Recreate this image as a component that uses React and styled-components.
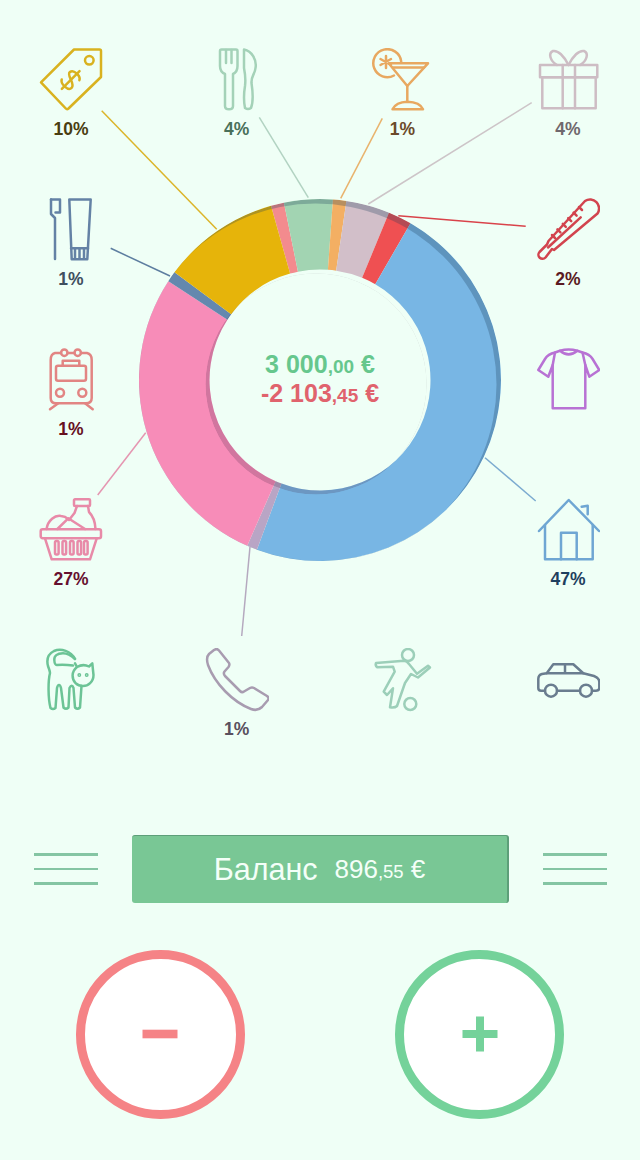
import React from "react";
import styled, { createGlobalStyle } from "styled-components";

const GlobalStyle = createGlobalStyle`
  html, body {
    margin: 0;
    padding: 0;
    background: #effff6;
  }
`;

const CX = 320;
const CY = 380;
const OUTER = 181;
const HOLE = 110.5;
const SHIFT_X = -4;
const SHIFT_Y = 4;
const RIM_X = -4.5;
const RIM_Y = 4.5;

const segments = [
  { from: -15.7, to: -11.5, color: "#f38b8e" },
  { from: -11.5, to: 4.1, color: "#a2d4b2" },
  { from: 4.1, to: 8.4, color: "#f3af63" },
  { from: 8.4, to: 22.4, color: "#d2bfc9" },
  { from: 22.4, to: 30, color: "#ef5052" },
  { from: 30, to: 200.4, color: "#78b6e4" },
  { from: 200.4, to: 203.7, color: "#b9a5c5" },
  { from: 203.7, to: 303.1, color: "#f78cb8" },
  { from: 303.1, to: 306.5, color: "#6488ae" },
  { from: 306.5, to: 344.3, color: "#e6b40a" },
];

const leaders = [
  { d: "M101.7 110.7 L216.7 229.3", color: "#dcb52a" },
  { d: "M259.3 117.3 L308.3 197.7", color: "#b2d3c2" },
  { d: "M382.3 118.3 L340.7 198.3", color: "#e9b36d" },
  { d: "M531.7 102.7 L368.3 204", color: "#cdc5c8" },
  { d: "M525.7 226.3 L398.3 215.7", color: "#d9434a" },
  { d: "M110.7 248.3 L170 276", color: "#5d7ea0" },
  { d: "M97.7 495 L145.7 432.7", color: "#e596b1" },
  { d: "M535.7 501 L485 457.7", color: "#7cabd0" },
  { d: "M241.7 636 L250 546.7", color: "#b5a9bf" },
];

const polar = (r, deg) => {
  const a = (deg * Math.PI) / 180;
  return [CX + r * Math.sin(a), CY - r * Math.cos(a)];
};

const ringPath = (from, to) => {
  const large = to - from > 180 ? 1 : 0;
  const [ax, ay] = polar(OUTER, from);
  const [bx, by] = polar(OUTER, to);
  const [cx, cy] = polar(HOLE, to);
  const [dx, dy] = polar(HOLE, from);
  return `M${ax} ${ay} A${OUTER} ${OUTER} 0 ${large} 1 ${bx} ${by} L${cx} ${cy} A${HOLE} ${HOLE} 0 ${large} 0 ${dx} ${dy} Z`;
};

const circlePath = (cx, cy, r) =>
  `M${cx - r} ${cy} a${r} ${r} 0 1 0 ${2 * r} 0 a${r} ${r} 0 1 0 ${-2 * r} 0 Z`;

const Icon = styled.svg.attrs({ viewBox: "0 0 64 64" })`
  display: block;
  width: 64px;
  height: 64px;
  fill: none;
  stroke: ${(p) => p.$tone};
  stroke-width: 2.5;
  stroke-linejoin: round;
  stroke-linecap: round;
`;

const TagIcon = (props) => (
  <Icon {...props}>
    <path d="M35 1.5 H60.5 Q62 1.5 62 3 V29 L29.5 60.5 Q28 61.8 26.8 60.5 L2 34.3 Z" />
    <circle cx="50.3" cy="12.3" r="4.3" />
    <g transform="rotate(45 31.7 32)">
      <path d="M38 26 C36 22 26 22 25.5 27 C25 32 38 31 38 37 C38 42 27 42 25 38" />
      <path d="M31.7 19.5 V44.5" />
    </g>
  </Icon>
);

const CutleryIcon = (props) => (
  <Icon {...props}>
    <path d="M16.5 1.5 H31 Q32.5 1.5 32.5 3 V18 Q32.5 24 28 26 V58 Q28 61.3 24 61.3 Q20 61.3 20 58 V26 Q15 24 15 18 V3 Q15 1.5 16.5 1.5 Z" />
    <path d="M21 2 V15 M26.5 2 V15" />
    <path d="M39 1.5 C47 3 52 12 50.5 20 C50 26 46 28 46.5 35 C48 45 48 55 46 60 Q43 62 40 60 Q38 50 40 38 Q41 30 39 20 Z" />
  </Icon>
);

const CocktailIcon = (props) => (
  <Icon {...props}>
    <path d="M31.2 13.5 A14 14 0 1 0 24 27.5" />
    <path d="M18.7 15.3 H58 L37.3 38 Z" />
    <path d="M23 19.5 H54" />
    <path d="M37.3 38 V53.7" />
    <path d="M22.5 61.3 Q26 54 37.3 53.7 Q50 54 53 61.3 Z" />
    <path d="M16 8 V20 M10.5 11 L21 17 M10.5 17 L21 11" />
  </Icon>
);

const GiftIcon = (props) => (
  <Icon {...props}>
    <rect x="4" y="17" width="57.3" height="12.3" />
    <rect x="6.3" y="29.3" width="53.4" height="31" />
    <path d="M26.7 17 V60.3 M39 17 V60.3" />
    <path d="M32.5 17 C28 8 22 2 17 3 C12 5 14 13 21 17" />
    <path d="M32.5 17 C37 8 43 2 48 3 C53 5 51 13 44 17" />
  </Icon>
);

const ThermometerIcon = (props) => (
  <Icon {...props}>
    <path d="M49 3 A9 9 0 0 1 61.5 15.5 L18 52 L16 51 L9.5 59.5 A3.5 3.5 0 0 1 3.5 54 L11 46.5 L12.5 43 Z" />
    <path d="M44.7 19.3 L12 49.5" />
    {[0, 1, 2, 3, 4, 5].map((i) => (
      <path key={i} d={`M${43 - 5.4 * i} ${9 + 5.6 * i} l3 3`} />
    ))}
  </Icon>
);

const DentalIcon = (props) => (
  <Icon {...props}>
    <path d="M12 1.5 H21 V14.5 H16.5" />
    <path d="M12 1.5 V16 L16 20 V61" />
    <path d="M30.3 1.5 H51.7 L48.3 61.3 H32.7 Z" />
    <path d="M32 50.3 H49 M36 50.3 V60 M40.5 50.3 V60 M45 50.3 V60" />
  </Icon>
);

const TrainIcon = (props) => (
  <Icon {...props}>
    <path d="M22 5 H16 Q11.7 6 11.7 12 V50 Q11.7 55.3 17 55.3 H47 Q52.7 55.3 52.7 50 V12 Q52.7 6 48 5 H42 M28.5 5 H35.5" />
    <circle cx="25.3" cy="4.7" r="3.2" />
    <circle cx="38.7" cy="4.7" r="3.2" />
    <rect x="17" y="17.7" width="30" height="15" rx="2" />
    <path d="M23.7 17.7 V12.7 H40.3 V17.7" />
    <circle cx="21" cy="44.7" r="4" />
    <circle cx="43.3" cy="44.7" r="4" />
    <path d="M11 61.3 L19.3 55.3 M53.7 61.3 L46 55.3" />
  </Icon>
);

const BasketIcon = (props) => (
  <Icon {...props}>
    <rect x="1.7" y="31.3" width="60.3" height="9" rx="2" />
    <path d="M6 40.3 L12.7 61.3 H51 L57.7 40.3" />
    {[16, 23.5, 31, 38.5, 45].map((x) => (
      <rect key={x} x={x} y="43" width="3.6" height="13.5" rx="1.5" />
    ))}
    <rect x="35" y="1.3" width="16" height="6.7" rx="1" />
    <path d="M38 8 L35.5 15 L30 22 M49 8 L50 14 Q56 20 56.5 31" />
    <path d="M18.4 31 L29.3 20.3 L46 31" />
    <path d="M7.5 31 C9 22 16 17 22 18 C25 18.3 27 19 29 21" />
  </Icon>
);

const ShirtIcon = (props) => (
  <Icon {...props}>
    <path d="M24 2.7 L19 4.5 Q12 6 9 11 L2.3 22 L12.3 28.7 L16.7 17 V60.3 H49.3 V17 L53.3 28.7 L63.3 22 L56.6 11 Q53.5 6 46.5 4.5 L41.3 2.7 Q32.6 0.5 24 2.7 Z" />
    <path d="M24 2.7 Q32.6 10 41.3 2.7" />
    <path d="M19 4.5 L16.7 17 M46.5 4.5 L49.3 17" />
  </Icon>
);

const HouseIcon = (props) => (
  <Icon {...props}>
    <path d="M3 33 L32.7 2 L63 33" />
    <path d="M9 27 V61.3 H56.7 V27" />
    <path d="M25 61.3 V34.7 H40.7 V61.3" />
    <path d="M45.7 8.7 L51.7 7.7 V16.3" />
  </Icon>
);

const CatIcon = (props) => (
  <Icon {...props}>
    <path d="M36 11 C32 3 22 0 15 3 C9 6 7.5 12 9 18 C10 21 11 23 11 25 C9 33 9 50 11.5 60 Q14 62 16.5 60 L18 40 C19 36 21 36 22 40 L24.5 59.5 Q27 62 29.5 59.5 L30.5 40 C32 37 33.5 37 34.5 40 L36 59.5 Q38.5 62 41 59.5 L42.5 38" />
    <path d="M36 11 C31 6.5 28 5.3 24 5.3 C18 5.3 15 8 15.3 12 C15.5 15 16 17 17.7 17 Q26 16.5 34 17.5" />
    <path d="M36 15.3 L38 19 Q44 15.5 50 18.5 L53.3 15.3 L54.5 27 C54.5 34 49 38 44 38 C38 38 33.6 34 33.6 27.5 C33.6 24 35 21.5 38 19" />
    <circle cx="40.3" cy="27" r="0.7" />
    <circle cx="47.7" cy="27" r="0.7" />
  </Icon>
);

const PhoneIcon = (props) => (
  <Icon {...props}>
    <path d="M9 2 Q12 0 14 2.5 L24 15 Q25 17 23.5 19 L19.5 23.5 Q18 25.5 20 28 L35 43 Q37 45 39 43.5 L45 40 Q47 39 49 40 L62 48 Q64.5 50 63 52 L57 59 C54 62 50 62.5 46 61 C28 54 10 36 3 17 C1.5 12 2 8 4 6 Z" />
  </Icon>
);

const PlayerIcon = (props) => (
  <Icon {...props}>
    <circle cx="38" cy="7" r="6" />
    <circle cx="40.3" cy="56" r="6" />
    <path d="M6 15 L34 12.7 Q37 13 39 16 L47 25.7 L58 17.7 L60 19.5 L48 29.5 L41 26 L35 35 L27 58 Q25 60 20 59.3 L23 40.3 L17 47 L13.7 43.7 L24.7 23.7 L23 18.7 L7 19.3 Q5 17 6 15 Z" />
  </Icon>
);

const CarIcon = (props) => (
  <Icon {...props}>
    <path d="M9 42.7 H5 Q2.3 42.7 2.3 40 V31 Q2.3 27 6 26 L10.7 25.3 L17.3 16.3 H37.3 L47.3 25.3 L58 28 Q63.3 30 63.3 34 V40 Q63.3 42.7 60 42.7 H56 M21 42.7 H44" />
    <circle cx="15" cy="42.7" r="6" />
    <circle cx="50" cy="42.7" r="6" />
    <path d="M10.7 25.3 H47.3 M29 16.3 V25.3" />
  </Icon>
);

const items = [
  { Glyph: TagIcon, col: 1, row: 1, tone: "#d9b21f", label: "10%", ink: "#4a3d10" },
  { Glyph: CutleryIcon, col: 2, row: 1, tone: "#a4d2b8", label: "4%", ink: "#49705a" },
  { Glyph: CocktailIcon, col: 3, row: 1, tone: "#e8a860", label: "1%", ink: "#6b4a2a" },
  { Glyph: GiftIcon, col: 4, row: 1, tone: "#cdbdc4", label: "4%", ink: "#6f686d" },
  { Glyph: DentalIcon, col: 1, row: 2, tone: "#6482a5", label: "1%", ink: "#3f4f5f" },
  { Glyph: ThermometerIcon, col: 4, row: 2, tone: "#d2444e", label: "2%", ink: "#5a1a22" },
  { Glyph: TrainIcon, col: 1, row: 3, tone: "#e28583", label: "1%", ink: "#66101f" },
  { Glyph: ShirtIcon, col: 4, row: 3, tone: "#b872d4" },
  { Glyph: BasketIcon, col: 1, row: 4, tone: "#e88aa8", label: "27%", ink: "#66102f" },
  { Glyph: HouseIcon, col: 4, row: 4, tone: "#6fa6d3", label: "47%", ink: "#1f3f5f" },
  { Glyph: CatIcon, col: 1, row: 5, tone: "#6cc496" },
  { Glyph: PhoneIcon, col: 2, row: 5, tone: "#a89cb0", label: "1%", ink: "#59505e" },
  { Glyph: PlayerIcon, col: 3, row: 5, tone: "#9ccfb9" },
  { Glyph: CarIcon, col: 4, row: 5, tone: "#6a7d8f" },
];

const Donut = () => (
  <ChartLayer viewBox="0 0 640 750">
    <defs>
      <clipPath id="outer-disk">
        <path d={circlePath(CX, CY - 48, OUTER)} />
      </clipPath>
      <clipPath id="hole-shifted">
        <path d={circlePath(CX + SHIFT_X, CY - 48 + SHIFT_Y, HOLE)} />
      </clipPath>
    </defs>
    <g transform="translate(0 -48)">
      {segments.map((s) => (
        <path key={s.from} d={ringPath(s.from, s.to)} fill={s.color} />
      ))}
    </g>
    {/* dark rim: outer disk minus the same disk nudged to the lower left, same for the hole */}
    <path
      clipPath="url(#outer-disk)"
      fillRule="evenodd"
      fill="rgba(30,60,90,.28)"
      d={circlePath(CX, CY - 48, OUTER) + circlePath(CX + RIM_X, CY - 48 + RIM_Y, OUTER)}
    />
    <path
      clipPath="url(#hole-shifted)"
      fillRule="evenodd"
      fill="rgba(60,30,60,.2)"
      d={circlePath(CX, CY - 48, HOLE) + circlePath(CX + SHIFT_X, CY - 48 + SHIFT_Y, HOLE)}
    />
    <g transform="translate(0 -48)">
      {leaders.map((l) => (
        <path key={l.d} d={l.d} stroke={l.color} strokeWidth="1.5" fill="none" />
      ))}
    </g>
  </ChartLayer>
);

export default function App() {
  return (
    <Page>
      <GlobalStyle />
      <Stage>
        {items.map(({ Glyph, col, row, tone, label, ink }) => (
          <Cell key={`${col}-${row}`} $col={col} $row={row}>
            <Glyph $tone={tone} />
            {label && <Percent $ink={ink}>{label}</Percent>}
          </Cell>
        ))}
        <Donut />
        <Totals>
          <TotalLine $ink="#66c78d">
            3 000<Cents>,00</Cents> €
          </TotalLine>
          <TotalLine $ink="#e0636d">
            -2 103<Cents>,45</Cents> €
          </TotalLine>
        </Totals>
      </Stage>
      <BalanceRow>
        <Rules>
          <Rule />
          <Rule />
          <Rule />
        </Rules>
        <BalanceBar>
          <BalanceTitle>Баланс</BalanceTitle>
          <BalanceSum>
            896<BalanceCents>,55</BalanceCents> €
          </BalanceSum>
        </BalanceBar>
        <Rules>
          <Rule />
          <Rule />
          <Rule />
        </Rules>
      </BalanceRow>
      <Actions>
        <RoundButton $tone="#f58386">
          <svg width="36" height="36" viewBox="0 0 36 36">
            <rect x="0.5" y="13.7" width="35" height="8.6" fill="#f58386" />
          </svg>
        </RoundButton>
        <RoundButton $tone="#74d29a">
          <svg width="36" height="36" viewBox="0 0 36 36">
            <path d="M14 .5 h8 v13.5 h13.5 v8 h-13.5 v13.5 h-8 v-13.5 h-13.5 v-8 h13.5 Z" fill="#74d29a" />
          </svg>
        </RoundButton>
      </Actions>
    </Page>
  );
}

const Page = styled.div`
  width: 640px;
  height: 1160px;
  overflow: hidden;
  box-sizing: border-box;
  padding-top: 48px;
  background: #effff6;
  font-family: "Liberation Sans", Arial, sans-serif;
`;

const Stage = styled.div`
  position: relative;
  height: 750px;
  box-sizing: border-box;
  padding-left: 11px;
  display: grid;
  grid-template-columns: repeat(4, 120px);
  grid-template-rows: repeat(5, 150px);
  column-gap: 45.67px;
`;

const Cell = styled.div`
  grid-column: ${(p) => p.$col};
  grid-row: ${(p) => p.$row};
  display: flex;
  flex-direction: column;
  align-items: center;
`;

const Percent = styled.div`
  margin-top: 8px;
  font-size: 17.5px;
  line-height: 18px;
  font-weight: 700;
  color: ${(p) => p.$ink};
`;

const ChartLayer = styled.svg`
  position: absolute;
  left: 0;
  top: 0;
  width: 640px;
  height: 750px;
  pointer-events: none;
`;

const Totals = styled.div`
  position: absolute;
  left: 210px;
  top: 302px;
  width: 220px;
  text-align: center;
  font-weight: 700;
  font-size: 25px;
  line-height: 29px;
`;

const TotalLine = styled.div`
  color: ${(p) => p.$ink};
`;

const Cents = styled.span`
  font-size: 19px;
  line-height: 0;
`;

const BalanceRow = styled.div`
  margin-top: 37px;
  height: 68px;
  box-sizing: border-box;
  padding: 0 33px 0 34px;
  display: flex;
  align-items: center;
  justify-content: space-between;
`;

const Rules = styled.div`
  width: 64px;
  display: flex;
  flex-direction: column;
  gap: 12px;
`;

const Rule = styled.div`
  height: 2.5px;
  background: #84c5a3;
`;

const BalanceBar = styled.div`
  width: 377px;
  height: 68px;
  box-sizing: border-box;
  display: flex;
  align-items: center;
  justify-content: center;
  gap: 17px;
  background: #79c795;
  border-top: 1px solid #5d9f79;
  border-right: 2px solid #5d9f79;
  border-radius: 3px;
  color: #f4fff8;
`;

const BalanceTitle = styled.span`
  font-size: 30.5px;
`;

const BalanceSum = styled.span`
  font-size: 26px;
`;

const BalanceCents = styled.span`
  font-size: 18.5px;
  line-height: 0;
`;

const Actions = styled.div`
  margin-top: 47px;
  padding: 0 76px;
  display: flex;
  justify-content: space-between;
`;

const RoundButton = styled.button`
  width: 168.6px;
  height: 168.6px;
  box-sizing: border-box;
  padding: 0;
  display: flex;
  align-items: center;
  justify-content: center;
  background: #ffffff;
  border: 9.5px solid ${(p) => p.$tone};
  border-radius: 50%;
`;
